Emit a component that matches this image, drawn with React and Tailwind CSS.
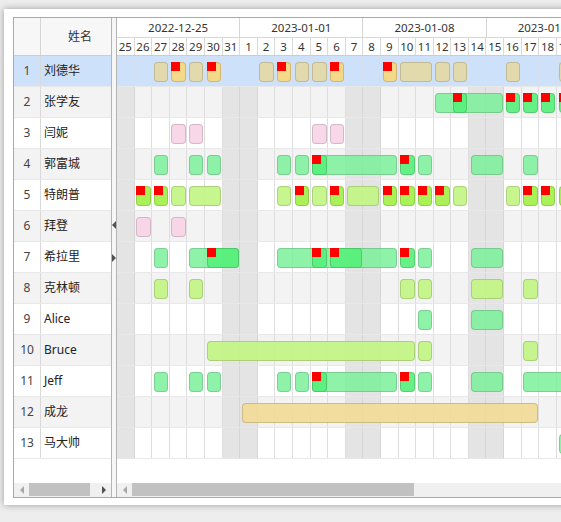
const COL = 17.6
const days = [25, 26, 27, 28, 29, 30, 31, 1, 2, 3, 4, 5, 6, 7, 8, 9, 10, 11, 12, 13, 14, 15, 16, 17, 18, 19]
const weekend = new Set([0, 6, 7, 13, 14, 20, 21])
const weeks = ['2022-12-25', '2023-01-01', '2023-01-08', '2023-01-15']

// bar fill per kind: b/B beige, p pink, g/G green, l/L lime, o orange
const fill = {
  b: 'bg-[#e4d9a4]/90',
  B: 'bg-[#f6d882]/95',
  p: 'bg-[#f7d4e6]/90',
  g: 'bg-[#7af09a]/85',
  G: 'bg-[#55ef7a]/90',
  l: 'bg-[#c2f582]/90',
  L: 'bg-[#a4f04e]/95',
  o: 'bg-[#f2da96]/90',
}

const rows = [
  { no: 1, name: '刘德华', bars: [[2, 1, 'b'], [3, 1, 'B', 1], [4, 1, 'b'], [5, 1, 'B', 1], [8, 1, 'b'], [9, 1, 'B', 1], [10, 1, 'b'], [11, 1, 'b'], [12, 1, 'B', 1], [15, 1, 'B', 1], [16, 2, 'b'], [18, 1, 'b'], [19, 1, 'b'], [22, 1, 'b'], [25, 1, 'b']] },
  { no: 2, name: '张学友', bars: [[18, 4, 'g'], [19, 1, 'G', 1], [22, 1, 'G', 1], [23, 1, 'G', 1], [24, 1, 'G', 1], [25, 1, 'G', 1]] },
  { no: 3, name: '闫妮', bars: [[3, 1, 'p'], [4, 1, 'p'], [11, 1, 'p'], [12, 1, 'p']] },
  { no: 4, name: '郭富城', bars: [[2, 1, 'g'], [4, 1, 'g'], [5, 1, 'g'], [9, 1, 'g'], [10, 1, 'g'], [11, 5, 'g'], [11, 1, 'G', 1], [16, 1, 'G', 1], [17, 1, 'g'], [20, 2, 'g'], [23, 1, 'g']] },
  { no: 5, name: '特朗普', bars: [[1, 1, 'L', 1], [2, 1, 'L', 1], [3, 1, 'l'], [4, 2, 'l'], [9, 1, 'l'], [10, 1, 'L', 1], [11, 1, 'l'], [12, 1, 'L', 1], [13, 2, 'l'], [15, 1, 'L', 1], [16, 1, 'L', 1], [17, 1, 'L', 1], [18, 1, 'L', 1], [19, 1, 'l'], [22, 1, 'l'], [23, 1, 'L', 1], [24, 1, 'L', 1], [25, 1, 'L']] },
  { no: 6, name: '拜登', bars: [[1, 1, 'p'], [3, 1, 'p']] },
  { no: 7, name: '希拉里', bars: [[2, 1, 'g'], [4, 3, 'g'], [5, 2, 'G', 1], [9, 7, 'g'], [11, 1, 'G', 1], [12, 2, 'G', 1], [16, 1, 'G', 1], [17, 1, 'g'], [20, 2, 'g']] },
  { no: 8, name: '克林顿', bars: [[2, 1, 'l'], [4, 1, 'l'], [16, 1, 'l'], [17, 1, 'l'], [20, 2, 'l'], [23, 1, 'l']] },
  { no: 9, name: 'Alice', bars: [[17, 1, 'g'], [20, 2, 'g']] },
  { no: 10, name: 'Bruce', bars: [[5, 12, 'l'], [17, 1, 'l'], [23, 1, 'l']] },
  { no: 11, name: 'Jeff', bars: [[2, 1, 'g'], [4, 1, 'g'], [5, 1, 'g'], [9, 1, 'g'], [10, 1, 'g'], [11, 5, 'g'], [11, 1, 'G', 1], [16, 1, 'G', 1], [17, 1, 'g'], [20, 2, 'g'], [23, 3, 'g']] },
  { no: 12, name: '成龙', bars: [[7, 17, 'o']] },
  { no: 13, name: '马大帅', bars: [[25, 1, 'g']] },
]

const rowBg = (i) => (i === 0 ? 'bg-[#cde1fb]' : i % 2 ? 'bg-[#f3f3f3]' : 'bg-white')

function cellBg(i, c) {
  if (i === 0) return 'bg-[#cde1fb] border-[#d4e0f0]'
  if (weekend.has(c)) return 'bg-[#e4e4e4] border-[#d6d6d6]'
  return 'border-[#dedede]'
}

const LeftArrow = ({ dark }) => (
  <span className={`w-0 h-0 border-y-[4px] border-y-transparent border-r-[4px] ${dark ? 'border-r-[#505050]' : 'border-r-[#a8a8a8]'}`} />
)
const RightArrow = ({ dark }) => (
  <span className={`w-0 h-0 border-y-[4px] border-y-transparent border-l-[4px] ${dark ? 'border-l-[#505050]' : 'border-l-[#a8a8a8]'}`} />
)

export default function App() {
  return (
    <div className="w-[561px] h-[522px] overflow-hidden bg-[#ededed] font-['Noto_Sans','Noto_Sans_CJK_SC',sans-serif] text-[#333]">
      <div className="ml-[4px] mt-[9px] w-[640px] h-[496px] bg-white shadow-[0_0_7px_rgba(0,0,0,0.35)] pl-[9px] pt-[8px]">
        <div className="flex h-[481px] border border-r-0 border-[#a9a9a9]">
          {/* left grid */}
          <div className="w-[97px] flex flex-col shrink-0">
            <div className="h-[38px] flex border-b border-[#cdcdcd] bg-[#f7f7f7]">
              <div className="w-[27px] border-r border-[#d6d6d6]" />
              <div className="flex-1 flex items-center justify-center pl-[8px] text-[12px]">姓名</div>
            </div>
            {rows.map((r, i) => (
              <div key={r.no} className={`h-[31px] flex border-b border-[#e8e8e8] ${rowBg(i)}`}>
                <div className="w-[27px] border-r border-[#d9d9d9] flex items-center justify-center text-[12px] text-[#444]">{r.no}</div>
                <div className="flex-1 flex items-center pl-[3px] text-[12px] text-[#222]">{r.name}</div>
              </div>
            ))}
            <div className="flex-1" />
            <div className="h-[14px] flex items-stretch bg-[#f0f0f0] pb-[1px]">
              <div className="w-[15px] flex items-center justify-center"><LeftArrow /></div>
              <div className="w-[61px] bg-[#c1c1c1]" />
              <div className="flex-1" />
              <div className="w-[15px] flex items-center justify-center"><RightArrow dark /></div>
            </div>
          </div>

          {/* splitter */}
          <div className="w-[6px] shrink-0 border-x border-[#b4b4b4] bg-[#f6f6f6] flex flex-col items-center pt-[203px] gap-[25px]">
            <LeftArrow dark />
            <RightArrow dark />
          </div>

          {/* chart */}
          <div className="flex-1 flex flex-col overflow-hidden">
            <div className="h-[20px] flex border-b border-[#d6d6d6] shrink-0">
              {weeks.map((w) => (
                <div key={w} className="w-[123.2px] shrink-0 border-r border-[#d6d6d6] flex items-center justify-center text-[11.5px] whitespace-nowrap">{w}</div>
              ))}
            </div>
            <div className="h-[18px] flex border-b border-[#cdcdcd] shrink-0">
              {days.map((d, c) => (
                <div key={c} className="w-[17.6px] shrink-0 border-r border-[#dadada] flex items-center justify-center text-[11.5px]">{d}</div>
              ))}
            </div>
            {rows.map((r, i) => (
              <div key={r.no} className={`relative h-[31px] shrink-0 flex border-b border-[#e8e8e8] ${rowBg(i)}`}>
                {days.map((d, c) => (
                  <div key={c} className={`w-[17.6px] shrink-0 h-full border-r ${cellBg(i, c)}`} />
                ))}
                {r.bars.map(([c, n, k, red], j) => (
                  <div
                    key={j}
                    className={`absolute top-[6px] h-[20px] rounded-[4px] border border-black/15 ${fill[k]}`}
                    style={{ left: c * COL + 1.5, width: n * COL - 3 }}
                  >
                    {red ? <div className="absolute -left-px -top-px w-[9px] h-[9px] bg-[#ff0000]" /> : null}
                  </div>
                ))}
              </div>
            ))}
            <div className="flex-1" />
            <div className="h-[14px] flex items-stretch bg-[#f0f0f0] pb-[1px] shrink-0">
              <div className="w-[15px] flex items-center justify-center"><LeftArrow /></div>
              <div className="w-[282px] bg-[#c1c1c1]" />
              <div className="flex-1" />
            </div>
          </div>
        </div>
      </div>
    </div>
  )
}
